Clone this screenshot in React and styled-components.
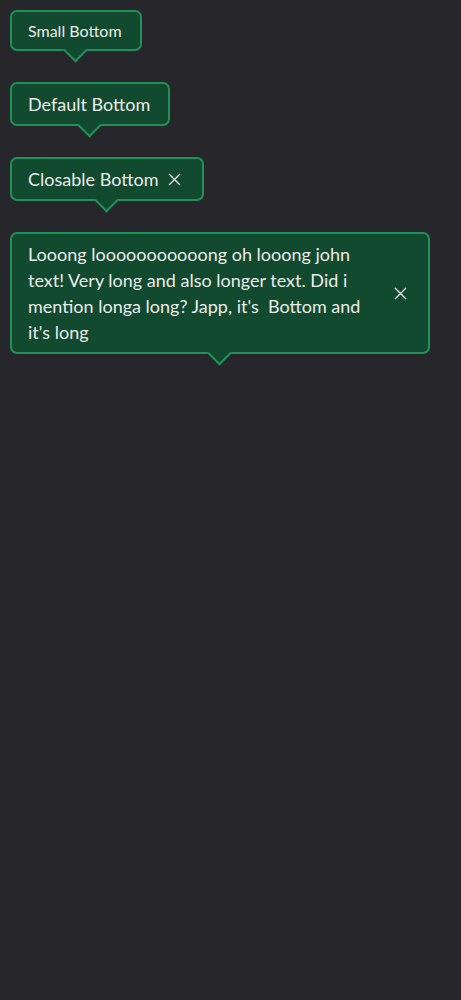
import React from 'react';
import styled, { createGlobalStyle } from 'styled-components';

const GlobalStyle = createGlobalStyle`
  html, body {
    margin: 0;
    padding: 0;
    background: #27262b;
  }
  body {
    font-family: Lato, "Open Sans", sans-serif;
    color: #ececec;
  }
`;

const StyledPage = styled.div`
  display: flex;
  flex-direction: column;
  align-items: flex-start;
  gap: 31px;
  padding: 10px;
  min-height: 1000px;
  box-sizing: border-box;
  background: #27262b;
`;

const Bubble = styled.div`
  position: relative;
  display: flex;
  align-items: center;
  gap: ${({ $long }) => ($long ? '22px' : '10px')};
  box-sizing: border-box;
  max-width: 420px;
  width: ${({ $long }) => ($long ? '420px' : 'auto')};
  padding: ${({ $small }) => ($small ? '8px 17px 8px 16px' : '7px 17px 7px 16px')};
  padding-right: ${({ $closable }) => ($closable ? '21px' : '18px')};
  background: #114a2e;
  border: 2px solid #21905a;
  border-radius: 7px;
  font-size: ${({ $small }) => ($small ? '16px' : '18px')};
  line-height: ${({ $small }) => ($small ? '21px' : '26px')};
  color: #ececec;

  &::after {
    content: '';
    position: absolute;
    left: 50%;
    bottom: -10px;
    width: 17px;
    height: 17px;
    margin-left: -9px;
    background: #114a2e;
    border-right: 2px solid #21905a;
    border-bottom: 2px solid #21905a;
    transform: rotate(45deg);
    box-sizing: border-box;
  }
`;

const Text = styled.span`
  flex: 1;
`;

const CloseButton = styled.button`
  display: flex;
  align-items: center;
  justify-content: center;
  flex: none;
  padding: 0;
  border: none;
  background: none;
  color: #ececec;
  cursor: pointer;
`;

const CloseIcon = () => (
  <svg width="13" height="13" viewBox="0 0 13 13" fill="none">
    <path d="M1 1L12 12M12 1L1 12" stroke="currentColor" strokeWidth="1.4" />
  </svg>
);

const Tooltip = ({ small, closable, long, children }) => (
  <Bubble $small={small} $closable={closable} $long={long}>
    <Text>{children}</Text>
    {closable && (
      <CloseButton aria-label="Close">
        <CloseIcon />
      </CloseButton>
    )}
  </Bubble>
);

const App = () => (
  <>
    <GlobalStyle />
    <StyledPage>
      <Tooltip small>Small Bottom</Tooltip>
      <Tooltip>Default Bottom</Tooltip>
      <Tooltip closable>Closable Bottom</Tooltip>
      <Tooltip closable long>
        Looong looooooooooong oh looong john text! Very long and also longer text. Did i
        mention longa long? Japp, it's&nbsp; Bottom and it's long
      </Tooltip>
    </StyledPage>
  </>
);

export default App;
